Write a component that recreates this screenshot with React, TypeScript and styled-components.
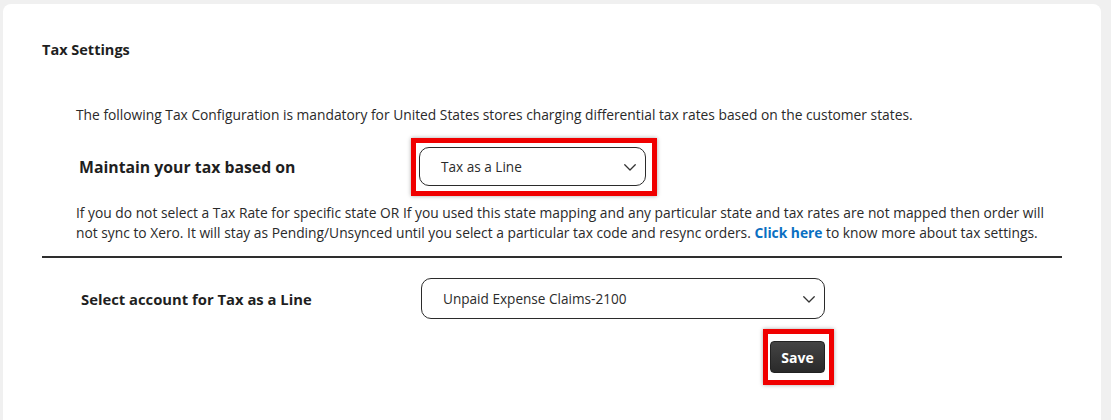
import React from "react";
import styled, { createGlobalStyle } from "styled-components";

const Global = createGlobalStyle`
  html, body { margin: 0; padding: 0; background: #f0f0f0; }
  body { font-family: "Open Sans", "Noto Sans", "Liberation Sans", sans-serif; color: #222; }
`;

const Page = styled.div`
  width: 1111px;
  height: 420px;
  overflow: hidden;
  padding: 4px 0 0 3px;
  box-sizing: border-box;
`;

const Card = styled.section`
  width: 1098px;
  min-height: 440px;
  background: #fff;
  border-radius: 8px;
  box-sizing: border-box;
  padding: 36px 39px 0 39px;
  display: flex;
  flex-direction: column;
`;

const Title = styled.h2`
  margin: 0;
  font-size: 14.5px;
  font-weight: 700;
  line-height: 20px;
  color: #1f1f1f;
`;

const Body = styled.div`
  padding-left: 34px;
  display: flex;
  flex-direction: column;
`;

const Note = styled.p<{ $top: number }>`
  margin: ${(p) => p.$top}px 0 0 0;
  font-size: 13.8px;
  line-height: 20px;
  color: #2a2a2a;
`;

const Link = styled.a`
  color: #0a6fc2;
  font-weight: 700;
  text-decoration: none;
`;

const Row = styled.div<{ $top: number; $indent: number }>`
  display: flex;
  align-items: center;
  margin-top: ${(p) => p.$top}px;
  padding-left: ${(p) => p.$indent}px;
`;

const Label = styled.div<{ $size: number; $width: number }>`
  width: ${(p) => p.$width}px;
  font-size: ${(p) => p.$size}px;
  font-weight: 700;
  color: #1f1f1f;
  flex-shrink: 0;
`;

const Highlight = styled.div<{ $pad: string }>`
  border: 5px solid #f00000;
  padding: ${(p) => p.$pad};
  box-shadow: 0 0 4px rgba(0, 0, 0, 0.35);
  display: flex;
`;

const SelectBox = styled.div<{ $width: number; $height: number }>`
  width: ${(p) => p.$width}px;
  height: ${(p) => p.$height}px;
  box-sizing: border-box;
  border: 1px solid #2b2b2b;
  border-radius: 10px;
  display: flex;
  align-items: center;
  justify-content: space-between;
  padding: 0 8px 0 21px;
  font-size: 13.6px;
  color: #2b2b2b;
  background: #fff;
`;

const Divider = styled.hr`
  margin: 13px 0 0 0;
  border: none;
  height: 2px;
  background: #2e2e2e;
`;

const Actions = styled.div`
  display: flex;
  padding-left: 721px;
  margin-top: 10px;
`;

const SaveButton = styled.button`
  width: 55px;
  height: 32px;
  border: 1px solid #222;
  border-radius: 4px;
  background: linear-gradient(#444, #2a2a2a);
  color: #fff;
  font-family: "Open Sans", "Noto Sans", sans-serif;
  font-weight: 700;
  font-size: 14px;
  padding: 0;
`;

const Chevron = () => (
  <svg width="14" height="14" viewBox="0 0 16 16" fill="none">
    <path d="M2 5.5l6 6 6-6" stroke="#333" strokeWidth="1.5" strokeLinecap="round" strokeLinejoin="round" />
  </svg>
);

export default function App() {
  return (
    <>
      <Global />
      <Page>
        <Card>
          <Title>Tax Settings</Title>
          <Body>
            <Note $top={45}>
              The following Tax Configuration is mandatory for United States stores charging differential tax rates based on the customer states.
            </Note>
            <Row $top={13} $indent={3}>
              <Label $size={15.8} $width={332}>Maintain your tax based on</Label>
              <Highlight $pad="4px 6px 5px 3px">
                <SelectBox $width={227} $height={39}>
                  <span>Tax as a Line</span>
                  <Chevron />
                </SelectBox>
              </Highlight>
            </Row>
            <Note $top={7}>
              If you do not select a Tax Rate for specific state OR If you used this state mapping and any particular state and tax rates are not mapped then order will not sync to Xero. It will stay as Pending/Unsynced until you select a particular tax code and resync orders. <Link href="#">Click here</Link> to know more about tax settings.
            </Note>
          </Body>
          <Divider />
          <Row $top={20} $indent={39}>
            <Label $size={14.8} $width={340}>Select account for Tax as a Line</Label>
            <SelectBox $width={404} $height={41}>
              <span>Unpaid Expense Claims-2100</span>
              <Chevron />
            </SelectBox>
          </Row>
          <Actions>
            <Highlight $pad="7px 4px 7px 2px">
              <SaveButton>Save</SaveButton>
            </Highlight>
          </Actions>
        </Card>
      </Page>
    </>
  );
}
